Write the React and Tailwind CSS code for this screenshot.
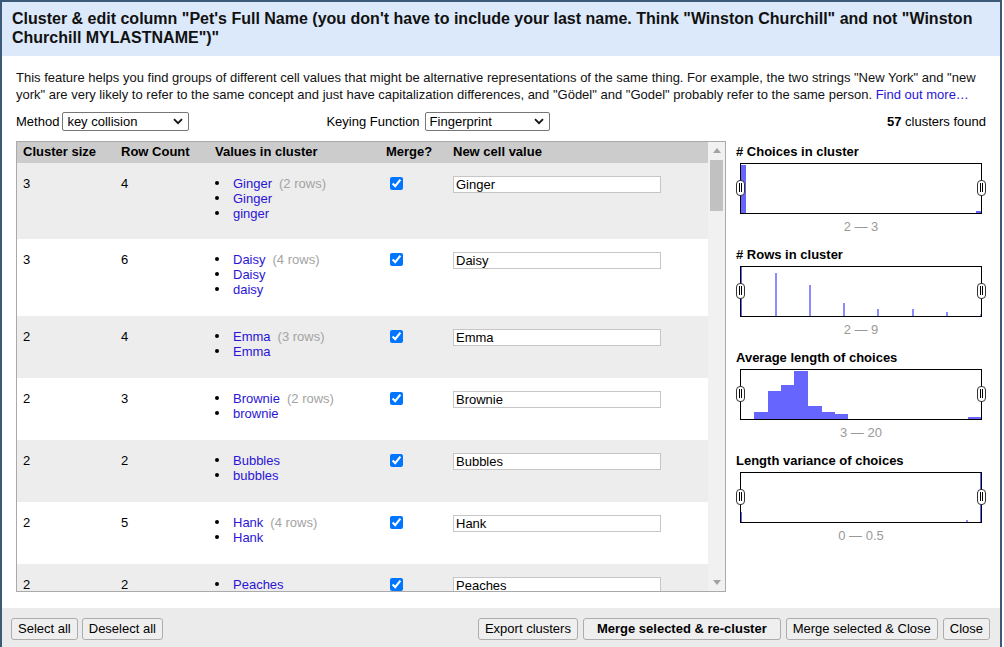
import React from 'react'

const font = "font-['Liberation_Sans',Arial,sans-serif]"

const clusters = [
  { size: 3, rows: 4, values: [['Ginger', '(2 rows)'], ['Ginger'], ['ginger']], newValue: 'Ginger', h: 'h-[76px]' },
  { size: 3, rows: 6, values: [['Daisy', '(4 rows)'], ['Daisy'], ['daisy']], newValue: 'Daisy', h: 'h-[77px]' },
  { size: 2, rows: 4, values: [['Emma', '(3 rows)'], ['Emma']], newValue: 'Emma', h: 'h-[62px]' },
  { size: 2, rows: 3, values: [['Brownie', '(2 rows)'], ['brownie']], newValue: 'Brownie', h: 'h-[62px]' },
  { size: 2, rows: 2, values: [['Bubbles'], ['bubbles']], newValue: 'Bubbles', h: 'h-[62px]' },
  { size: 2, rows: 5, values: [['Hank', '(4 rows)'], ['Hank']], newValue: 'Hank', h: 'h-[62px]' },
  { size: 2, rows: 2, values: [['Peaches'], ['peaches']], newValue: 'Peaches', h: 'h-[62px]' },
]

const cols = 'grid grid-cols-[98px_94px_171px_67px_1fr]'

function FakeSelect({ value, width }) {
  return (
    <div
      className={`flex h-[19px] items-center justify-between rounded-[2px] border border-[#767676] bg-white pl-[4px] pr-[5px] text-[13px] text-black ${width}`}
    >
      <span>{value}</span>
      <svg width="10" height="7" viewBox="0 0 10 7">
        <path d="M1 1.2 L5 5.2 L9 1.2" fill="none" stroke="#111" strokeWidth="1.8" />
      </svg>
    </div>
  )
}

function Handle() {
  return (
    <div className="flex h-[16px] w-[9px] items-center justify-center gap-[1px] rounded-[4px] border border-[#333] bg-white">
      <div className="h-[9px] w-[1px] bg-black" />
      <div className="h-[9px] w-[1px] bg-black" />
    </div>
  )
}

function Facet({ title, range, children }) {
  return (
    <div className="mb-[12px]">
      <div className="h-[16px] text-[13px] font-bold leading-[16px] text-black">{title}</div>
      <div className="relative ml-[4px] mt-[3px] h-[51px] w-[242px] border border-black bg-white">
        <svg width="240" height="49" className="block">
          {children}
        </svg>
        <div className="absolute left-[-5px] top-[16px]">
          <Handle />
        </div>
        <div className="absolute right-[-5px] top-[16px]">
          <Handle />
        </div>
      </div>
      <div className="ml-[4px] mt-[5px] w-[242px] text-center text-[13px] leading-[16px] text-[#999]">{range}</div>
    </div>
  )
}

function Button({ children, bold, wide }) {
  return (
    <button
      className={`h-[22px] rounded-[3px] border border-[#adadad] bg-[#efefef] text-[13px] text-black ${
        wide ? 'px-[13px]' : 'px-[6px]'
      } ${bold ? 'font-bold' : ''}`}
    >
      {children}
    </button>
  )
}

export default function App() {
  const blue = '#6666ff'
  const light = '#8c8cff'
  return (
    <div className={`${font} mr-[2px] flex h-[647px] flex-col overflow-hidden border-x-2 border-t-2 border-[#3c5a78] bg-white text-black`}>
      <div className="bg-[#dce9fa] pb-[9px] pl-[10px] pr-[10px] pt-[7px] text-[16px] font-bold leading-[19px] text-[#111]">
        Cluster &amp; edit column "Pet's Full Name (you don't have to include your last name. Think "Winston Churchill" and not "Winston
        Churchill MYLASTNAME")"
      </div>

      <div className="flex flex-1 flex-col px-[14px] pt-[13px]">
        <p className="text-[13px] leading-[17px] text-[#111]">
          This feature helps you find groups of different cell values that might be alternative representations of the same thing. For
          example, the two strings "New York" and "new york" are very likely to refer to the same concept and just have capitalization
          differences, and "Gödel" and "Godel" probably refer to the same person.{' '}
          <span className="text-[#2a14d6]">Find out more…</span>
        </p>

        <div className="mt-[9px] flex items-center text-[13px]">
          <span className="mr-[3px]">Method</span>
          <FakeSelect value="key collision" width="w-[127px]" />
          <span className="ml-[137px] mr-[5px]">Keying Function</span>
          <FakeSelect value="Fingerprint" width="w-[125px]" />
          <span className="ml-auto">
            <b>57</b> clusters found
          </span>
        </div>

        <div className="mt-[9px] flex gap-[10px]">
          <div className="flex h-[451px] w-[710px] border border-[#aaa]">
            <div className="flex-1 overflow-hidden text-[13px]">
              <div className={`${cols} h-[21px] items-center bg-[#cccccc] font-bold`}>
                <div className="pl-[6px]">Cluster size</div>
                <div className="pl-[6px]">Row Count</div>
                <div className="pl-[6px]">Values in cluster</div>
                <div className="pl-[6px]">Merge?</div>
                <div className="pl-[6px]">New cell value</div>
              </div>
              {clusters.map((c, i) => (
                <div
                  key={i}
                  className={`${cols} ${c.h} shrink-0 items-start pt-[13px] leading-[15px] ${i % 2 === 0 ? 'bg-[#ededed]' : 'bg-white'}`}
                >
                  <div className="pl-[6px]">{c.size}</div>
                  <div className="pl-[6px]">{c.rows}</div>
                  <div className="pl-[6px]">
                    {c.values.map((v, j) => (
                      <div key={j} className="flex items-center">
                        <div className="mr-[14px] h-[4px] w-[4px] rounded-full bg-black" />
                        <span className="text-[#2a14d6]">{v[0]}</span>
                        {v[1] ? <span className="ml-[7px] text-[#a3a3a3]">{v[1]}</span> : null}
                      </div>
                    ))}
                  </div>
                  <div className="pl-[10px] pt-[1px]">
                    <input type="checkbox" checked readOnly className="m-0 block h-[13px] w-[13px]" />
                  </div>
                  <div className="pl-[6px]">
                    <div className="flex h-[17px] w-[208px] items-center border border-[#c6c6c6] bg-white pl-[2px] text-black">
                      {c.newValue}
                    </div>
                  </div>
                </div>
              ))}
            </div>
            <div className="flex w-[17px] flex-col items-center bg-[#f1f1f1]">
              <div className="flex h-[17px] items-center justify-center">
                <svg width="8" height="5" viewBox="0 0 8 5">
                  <path d="M0 5 L4 0 L8 5 Z" fill="#a3a3a3" />
                </svg>
              </div>
              <div className="mt-[1px] h-[51px] w-[13px] bg-[#c1c1c1]" />
              <div className="flex-1" />
              <div className="flex h-[17px] items-center justify-center">
                <svg width="8" height="5" viewBox="0 0 8 5">
                  <path d="M0 0 L4 5 L8 0 Z" fill="#a3a3a3" />
                </svg>
              </div>
            </div>
          </div>

          <div className="w-[250px] pt-[3px]">
            <Facet title="# Choices in cluster" range="2 — 3">
              <rect x="0" y="1" width="5" height="48" fill={blue} />
              <rect x="235" y="47" width="5" height="2" fill={blue} />
            </Facet>
            <Facet title="# Rows in cluster" range="2 — 9">
              <rect x="0" y="0" width="1" height="49" fill={blue} />
              <rect x="34" y="6" width="2" height="43" fill={light} />
              <rect x="68" y="18" width="2" height="31" fill={light} />
              <rect x="102" y="36" width="2" height="13" fill={light} />
              <rect x="136" y="42" width="2" height="7" fill={light} />
              <rect x="171" y="42" width="2" height="7" fill={light} />
              <rect x="205" y="45" width="2" height="4" fill={light} />
              <rect x="239" y="47" width="1" height="2" fill={light} />
            </Facet>
            <Facet title="Average length of choices" range="3 — 20">
              <rect x="13" y="42" width="14" height="7" fill={blue} />
              <rect x="27" y="21" width="13" height="28" fill={blue} />
              <rect x="40" y="15" width="13" height="34" fill={blue} />
              <rect x="53" y="1" width="14" height="48" fill={blue} />
              <rect x="67" y="36" width="14" height="13" fill={blue} />
              <rect x="81" y="42" width="13" height="7" fill={blue} />
              <rect x="94" y="44" width="13" height="5" fill={blue} />
              <rect x="227" y="47" width="13" height="2" fill={blue} />
            </Facet>
            <Facet title="Length variance of choices" range="0 — 0.5">
              <rect x="0" y="39" width="1" height="10" fill={blue} />
              <rect x="225" y="47" width="2" height="2" fill={light} />
              <rect x="239" y="0" width="1" height="49" fill={blue} />
            </Facet>
          </div>
        </div>
      </div>

      <div className="flex h-[39px] items-start bg-[#ebebeb] pl-[9px] pr-[10px] pt-[10px]">
        <div className="flex gap-[4px]">
          <Button>Select all</Button>
          <Button>Deselect all</Button>
        </div>
        <div className="ml-auto flex gap-[5px]">
          <Button>Export clusters</Button>
          <Button bold wide>
            Merge selected &amp; re-cluster
          </Button>
          <Button>Merge selected &amp; Close</Button>
          <Button>Close</Button>
        </div>
      </div>
    </div>
  )
}
